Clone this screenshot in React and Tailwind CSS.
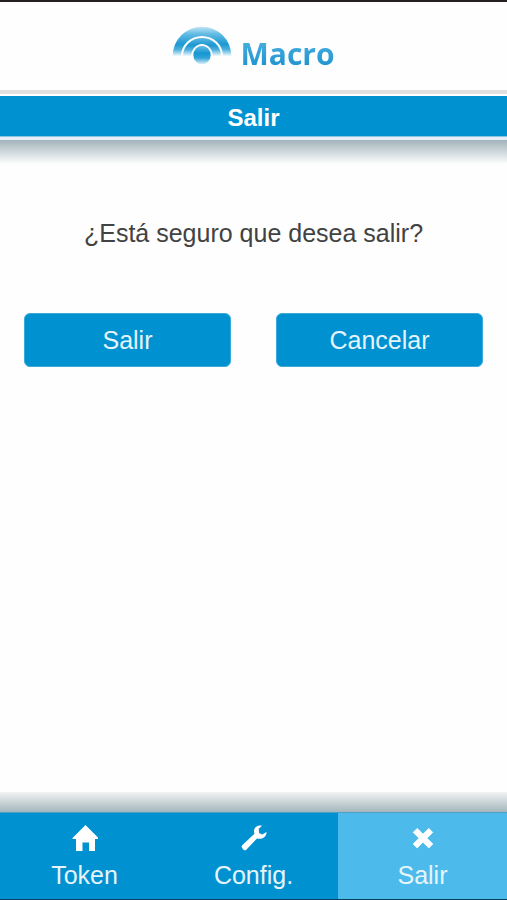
import React, { useState } from "react";

const MacroLogo = () => (
  <svg viewBox="0 0 180 120" className="w-[60px] h-[40px]" aria-hidden="true">
    <defs>
      <linearGradient id="outerArc" x1="0" y1="0" x2="0" y2="1">
        <stop offset="0" stopColor="#c3e4f4" />
        <stop offset="0.25" stopColor="#62bbe3" />
        <stop offset="0.6" stopColor="#1c98d2" />
        <stop offset="0.78" stopColor="#4db0dd" />
        <stop offset="1" stopColor="#f4fafd" />
      </linearGradient>
      <linearGradient id="innerArc" x1="0" y1="0" x2="0" y2="1">
        <stop offset="0" stopColor="#5bb8e1" />
        <stop offset="0.4" stopColor="#1c98d2" />
        <stop offset="0.65" stopColor="#4db0dd" />
        <stop offset="1" stopColor="#f4fafd" />
      </linearGradient>
      <linearGradient id="ball" x1="0" y1="0" x2="0" y2="1">
        <stop offset="0" stopColor="#69bfe4" />
        <stop offset="0.4" stopColor="#1696d2" />
        <stop offset="0.65" stopColor="#2fa3d8" />
        <stop offset="1" stopColor="#e0f2fa" />
      </linearGradient>
    </defs>
    <path d="M2 90A88 88 0 0 1 178 90H153A63 60 0 0 0 27 90Z" fill="url(#outerArc)" />
    <path d="M33 90A57 54 0 0 1 147 90H122A32 36 0 0 0 58 90Z" fill="url(#innerArc)" />
    <ellipse cx="90" cy="87" rx="26" ry="28" fill="url(#ball)" />
  </svg>
);

const HomeIcon = () => (
  <svg viewBox="0 0 26 26" className="w-[26px] h-[26px]" fill="currentColor" aria-hidden="true">
    <path d="M13.500 0L26.500 13V14H23V26H17V17.500H10.500V26H4V14H.5V13Z" />
  </svg>
);

const WrenchIcon = () => (
  <svg viewBox="0 0 26 26" className="w-[26px] h-[26px]" fill="currentColor" aria-hidden="true">
    <path d="M21 .8C17.500 -.3 14 1.500 13.200 4.700C12.900 6.100 13 7.500 13.400 8.800L1.200 20.200C.5 21 .4 22 1.100 22.900L2.800 24.900C3.500 25.600 4.500 25.500 5.300 24.700L16 13.400C18.700 14.300 22 13.700 24 11.500C25 10.300 25.800 8.400 25.500 6.900L21.300 9.600L18 7.900L17.800 3.700Z" />
  </svg>
);

const CloseIcon = () => (
  <svg viewBox="0 0 26 26" className="w-[26px] h-[26px]" fill="currentColor" aria-hidden="true">
    <path
      d="M7.200 3.500L13 9.300L18.800 3.500L22.700 7.400L16.900 13.200L22.700 19L18.800 22.900L13 17.100L7.200 22.900L3.300 19L9.100 13.200L3.300 7.400Z"
      stroke="currentColor"
      strokeLinejoin="round"
    />
  </svg>
);

const tabs = [
  { id: "token", label: "Token", icon: HomeIcon },
  { id: "config", label: "Config.", icon: WrenchIcon },
  { id: "salir", label: "Salir", icon: CloseIcon },
];

const App = () => {
  const [activeTab, setActiveTab] = useState("salir");

  return (
    <div className="min-h-screen flex flex-col bg-[#fefefe] border-t-2 border-t-[#231f20] border-b border-b-[#0b3f60] font-['Liberation_Sans',Arial,sans-serif] text-[25px] leading-8">
      {/* Brand */}
      <header className="flex justify-center items-center gap-2 h-[88px]">
        <MacroLogo />
        <span className="pt-4 font-['Open_Sans','Noto_Sans',sans-serif] text-[30px] leading-8 font-bold text-transparent bg-clip-text bg-linear-to-b from-[#45aede] from-40% to-[#1590cd]">
          Macro
        </span>
      </header>

      {/* Title bar */}
      <div className="h-1 bg-[#dfdfdf]" />
      <div className="h-[2px] bg-white" />
      <h1 className="h-10 flex items-center justify-center pt-1 bg-[#0091d0] text-white text-2xl font-bold">
        Salir
      </h1>
      <div className="h-1 bg-[#e6eef8] border-t border-t-[#8cc4e4]" />
      <div className="h-6 bg-linear-to-b from-[#a3b4bb] to-[#fefefe]" />

      <main className="flex-1 flex flex-col px-6 pt-[53px]">
        <p className="text-center text-[#424242]">¿Está seguro que desea salir?</p>
        <div className="grid grid-cols-2 gap-[45px] pt-16">
          <button type="button" className="h-[54px] rounded-md bg-[#0091d0] border border-[#3ba9da] text-[#e6f4fb]">
            Salir
          </button>
          <button type="button" className="h-[54px] rounded-md bg-[#0091d0] border border-[#3ba9da] text-[#e6f4fb]">
            Cancelar
          </button>
        </div>
      </main>

      {/* Bottom navigation */}
      <div className="h-5 bg-linear-to-b from-[#f2f3f4] to-[#a5b7bc]" />
      <nav className="grid grid-cols-3 border-t border-t-[#4d9fc6]">
        {tabs.map(({ id, label, icon: Icon }) => (
          <button
            key={id}
            type="button"
            onClick={() => setActiveTab(id)}
            className={`flex flex-col items-center gap-2 pt-3 pb-2 ${
              activeTab === id ? "bg-[#4cbbeb]" : "bg-[#0091d0]"
            }`}
          >
            <span className="text-white">
              <Icon />
            </span>
            <span className="text-[#e6f4fb]">{label}</span>
          </button>
        ))}
      </nav>
    </div>
  );
};

export default App;
